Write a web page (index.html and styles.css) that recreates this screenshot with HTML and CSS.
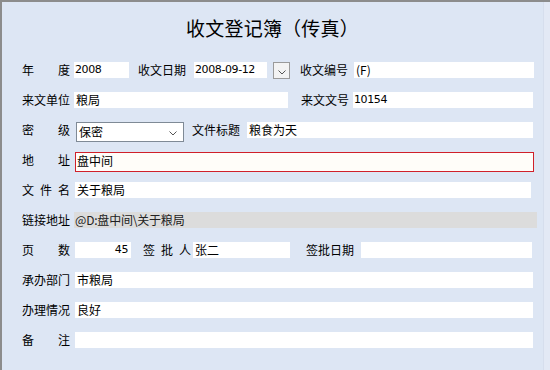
FILE: index.html
```html
<!DOCTYPE html>
<html lang="zh-CN">
<head>
<meta charset="utf-8">
<title>收文登记簿（传真）</title>
<link rel="stylesheet" href="styles.css">
</head>
<body>
<div class="frame">
  <div class="main">
    <h1 class="title">收文登记簿（传真）</h1>
    <div class="form">
      <div class="row">
        <span class="label">年度</span>
        <div class="field w-year num">2008</div>
        <span class="label ml-9">收文日期</span>
        <div class="field w-date num ml-8">2008-09-12</div>
        <div class="date-btn"><svg width="8" height="5" viewBox="0 0 8 5"><path d="M0.5 0.5 L4 4 L7.5 0.5" fill="none" stroke="#555" stroke-width="1"/></svg></div>
        <span class="label ml-10">收文编号</span>
        <div class="field w-right ml-6">(F)</div>
      </div>
      <div class="row">
        <span class="label">来文单位</span>
        <div class="field w-unit">粮局</div>
        <span class="label ml-13">来文文号</span>
        <div class="field w-right num ml-4">10154</div>
      </div>
      <div class="row">
        <span class="label">密级</span>
        <div class="select">保密<svg class="chev" width="8" height="5" viewBox="0 0 8 5"><path d="M0.5 0.5 L4 4 L7.5 0.5" fill="none" stroke="#555" stroke-width="1"/></svg></div>
        <span class="label ml-8">文件标题</span>
        <div class="field w-title ml-7">粮食为天</div>
      </div>
      <div class="row">
        <span class="label">地址</span>
        <div class="field focus">盘中间</div>
      </div>
      <div class="row">
        <span class="label">文件名</span>
        <div class="field w-name ml-5">关于粮局</div>
      </div>
      <div class="row">
        <span class="label">链接地址</span>
        <div class="field link">@D:盘中间\关于粮局</div>
      </div>
      <div class="row">
        <span class="label">页数</span>
        <div class="field w-pages num ml-5">45</div>
        <span class="label ml-12">签批人</span>
        <div class="field w-signer ml-2">张二</div>
        <span class="label ml-16">签批日期</span>
        <div class="field w-sdate ml-7"></div>
      </div>
      <div class="row">
        <span class="label">承办部门</span>
        <div class="field w-full ml-5">市粮局</div>
      </div>
      <div class="row">
        <span class="label">办理情况</span>
        <div class="field w-full ml-5">良好</div>
      </div>
      <div class="row">
        <span class="label">备注</span>
        <div class="field w-full ml-5"></div>
      </div>
    </div>
  </div>
  <div class="side"></div>
</div>
</body>
</html>
```
FILE: styles.css
```css
* { box-sizing: border-box; }
html, body { margin: 0; padding: 0; }
body {
  width: 550px;
  height: 370px;
  overflow: hidden;
  font-family: "Noto Sans CJK SC", "Liberation Sans", sans-serif;
  font-size: 12px;
  color: #000;
  background: #dde6f4;
}
.frame {
  display: flex;
  width: 550px;
  height: 370px;
  border-top: 2px solid #8c8c8c;
  border-left: 2px solid #8c8c8c;
  background: #dde6f4;
}
.main {
  width: 541px;
  height: 100%;
}
.side {
  flex: 1;
  background: #e3e9f5;
  border-left: 1px solid #d6deed;
}
.title {
  margin: 0;
  padding-top: 15px;
  height: 60px;
  font-size: 19px;
  line-height: 22px;
  font-weight: normal;
  text-align: center;
  letter-spacing: 0.2px;
}
.form {
  padding-left: 20px;
  display: flex;
  flex-direction: column;
  gap: 10px;
}
.row {
  display: flex;
  align-items: flex-start;
  height: 20px;
}
.label {
  width: 48px;
  height: 16px;
  line-height: 16px;
  text-align: justify;
  text-align-last: justify;
  white-space: nowrap;
  flex: none;
}
.field {
  flex: none;
  height: 16px;
  line-height: 16px;
  background: #fff;
  padding: 0 2px;
  margin-left: 4px;
  white-space: nowrap;
  overflow: hidden;
}
.num {
  font-family: "DejaVu Sans", "Liberation Sans", sans-serif;
  font-size: 11px;
  letter-spacing: -0.4px;
  padding-left: 1px;
}
.w-year { width: 55px; }
.w-date { width: 73px; }
.w-right { width: 180px; }
.w-unit { width: 214px; }
.w-title { width: 286px; }
.w-name { width: 456px; }
.w-pages { width: 56px; text-align: right; padding-right: 3px; }
.w-signer { width: 97px; }
.w-sdate { width: 171px; }
.w-full { width: 458px; }
.date-btn {
  flex: none;
  width: 17px;
  height: 17px;
  margin-left: 6px;
  border: 1px solid #9a9a9a;
  background: #f3f3f3;
  display: flex;
  align-items: flex-end;
  justify-content: center;
  padding-bottom: 3px;
}
.select {
  flex: none;
  position: relative;
  width: 108px;
  height: 20px;
  margin-left: 6px;
  border: 1px solid #7f8a96;
  background: #fff;
  line-height: 18px;
  padding-left: 2px;
}
.select .chev {
  position: absolute;
  right: 6px;
  top: 8px;
}
.focus {
  width: 459px;
  height: 20px;
  margin-left: 5px;
  border: 1px solid #d0202a;
  background: #fffdf9;
  padding: 0 0 0 1px;
}
.link {
  width: 463px;
  background: #dcdcdc;
  color: #222;
  padding-left: 1px;
  letter-spacing: -0.2px;
}
.ml-2 { margin-left: 2px; }
.ml-4 { margin-left: 4px; }
.ml-5 { margin-left: 5px; }
.ml-6 { margin-left: 6px; }
.ml-7 { margin-left: 7px; }
.ml-8 { margin-left: 8px; }
.ml-9 { margin-left: 9px; }
.ml-10 { margin-left: 10px; }
.ml-12 { margin-left: 12px; }
.ml-13 { margin-left: 13px; }
.ml-16 { margin-left: 16px; }
```
